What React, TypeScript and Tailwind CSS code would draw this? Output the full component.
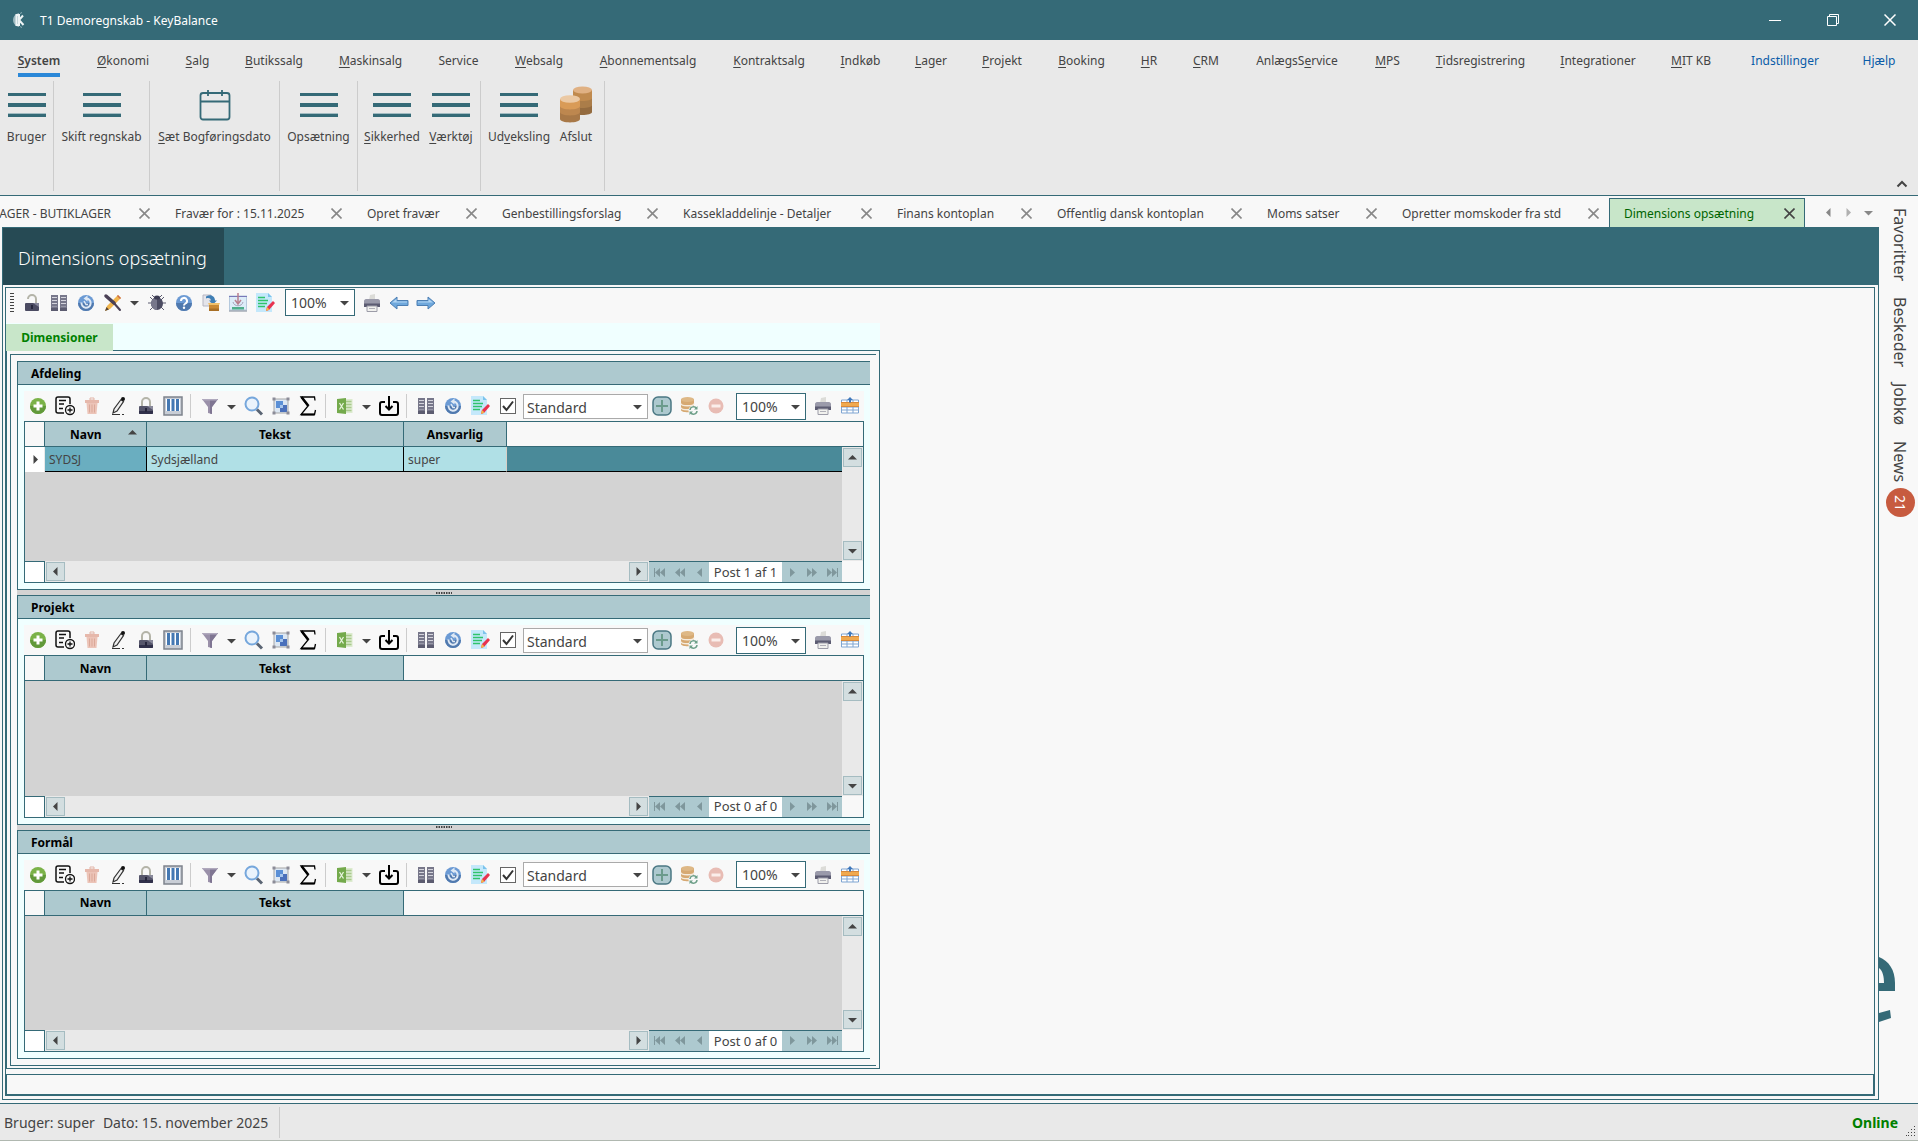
import type { ReactNode } from 'react'
import { Fragment } from 'react'
import clsx from 'clsx'

interface MenuEntry {
  label: string
  width: string
  active?: boolean
  link?: boolean
}

// '&' stands before the accelerator letter
const MENU: MenuEntry[] = [
  { label: '&System', width: 'w-[78px]', active: true },
  { label: '&Økonomi', width: 'w-[90px]' },
  { label: '&Salg', width: 'w-[59px]' },
  { label: '&Butikssalg', width: 'w-[94px]' },
  { label: '&Maskinsalg', width: 'w-[99px]' },
  { label: 'Service', width: 'w-[77px]' },
  { label: '&Websalg', width: 'w-[84px]' },
  { label: '&Abonnementsalg', width: 'w-[134px]' },
  { label: '&Kontraktsalg', width: 'w-[108px]' },
  { label: '&Indkøb', width: 'w-[75px]' },
  { label: '&Lager', width: 'w-[66px]' },
  { label: '&Projekt', width: 'w-[76px]' },
  { label: '&Booking', width: 'w-[83px]' },
  { label: '&HR', width: 'w-[52px]' },
  { label: '&CRM', width: 'w-[62px]' },
  { label: 'AnlægsS&ervice', width: 'w-[120px]' },
  { label: '&MPS', width: 'w-[61px]' },
  { label: '&Tidsregistrering', width: 'w-[125px]' },
  { label: '&Integrationer', width: 'w-[110px]' },
  { label: '&MIT KB', width: 'w-[76px]' },
  { label: 'Indstillinger', width: 'w-[112px]', link: true },
  { label: 'Hjælp', width: 'w-[76px]', link: true },
]

const TABS = [
  { label: 'LAGER - BUTIKLAGER', width: 'w-[182px]' },
  { label: 'Fravær for : 15.11.2025', width: 'w-[192px]' },
  { label: 'Opret fravær', width: 'w-[135px]' },
  { label: 'Genbestillingsforslag', width: 'w-[181px]' },
  { label: 'Kassekladdelinje - Detaljer', width: 'w-[214px]' },
  { label: 'Finans kontoplan', width: 'w-[160px]' },
  { label: 'Offentlig dansk kontoplan', width: 'w-[210px]' },
  { label: 'Moms satser', width: 'w-[135px]' },
  { label: 'Opretter momskoder fra std', width: 'w-[222px]' },
  { label: 'Dimensions opsætning', width: 'w-[196px]', active: true },
]

interface GroupData {
  title: string
  columns: string[]
  rows: string[][]
  status: string
}

const GROUPS: GroupData[] = [
  {
    title: 'Afdeling',
    columns: ['Navn', 'Tekst', 'Ansvarlig'],
    rows: [['SYDSJ', 'Sydsjælland', 'super']],
    status: 'Post 1 af 1',
  },
  { title: 'Projekt', columns: ['Navn', 'Tekst'], rows: [], status: 'Post 0 af 0' },
  { title: 'Formål', columns: ['Navn', 'Tekst'], rows: [], status: 'Post 0 af 0' },
]

const COLUMN_WIDTHS = ['w-[102px]', 'w-[257px]', 'w-[103px]']

function Hotkey({ label }: { label: string }) {
  const i = label.indexOf('&')
  if (i < 0) return <>{label}</>
  return (
    <>
      {label.slice(0, i)}
      <span className="underline underline-offset-2">{label[i + 1]}</span>
      {label.slice(i + 2)}
    </>
  )
}

function Svg({ children, size = 20 }: { children: ReactNode; size?: number }) {
  return (
    <svg width={size} height={size} viewBox={`0 0 ${size} ${size}`} fill="none" aria-hidden="true" className="shrink-0">
      {children}
    </svg>
  )
}

type Direction = 'up' | 'down' | 'left' | 'right'

const TRIANGLES: Record<Direction, string> = {
  up: 'M1 7.500L5.500 3L10 7.500Z',
  down: 'M1 4L5.500 8.500L10 4Z',
  left: 'M7.500 1L3 5.500L7.500 10Z',
  right: 'M3.500 1L8 5.500L3.500 10Z',
}

function Triangle({ dir, color = '#444444' }: { dir: Direction; color?: string }) {
  return (
    <Svg size={11}>
      <path d={TRIANGLES[dir]} fill={color} />
    </Svg>
  )
}

function LockIcon() {
  return (
    <Svg>
      <path d="M6 10V6a4 4 0 0 1 8 0v5" stroke="#b4b4a8" strokeWidth="2" />
      <rect x="3" y="10" width="14" height="8" rx="1" fill="#56566b" />
      <path d="M3 15h14v2a1 1 0 0 1-1 1H4a1 1 0 0 1-1-1z" fill="#30304a" />
      <path d="M11 10h5a1 1 0 0 1 1 1v3z" fill="#8a8a9b" />
      <path d="M9 12h2v4H9z" fill="#26263c" />
    </Svg>
  )
}

function UnlockIcon() {
  return (
    <Svg>
      <path d="M6 6a4 4 0 0 1 8 0v5" stroke="#b4b4a8" strokeWidth="2" />
      <rect x="3" y="10" width="14" height="8" rx="1" fill="#4b4b62" />
      <path d="M11 10h5a1 1 0 0 1 1 1v3z" fill="#85859a" />
      <path d="M9 12h2v4H9z" fill="#26263c" />
    </Svg>
  )
}

function BookIcon() {
  return (
    <Svg>
      <path d="M2 2h7v15H2zM11 2h7v15h-7z" fill="#77778a" />
      <path d="M2 15h7v3H2zM11 15h7v3h-7z" fill="#5c5c70" />
      <path d="M3 4.500h5M3 7.500h5M3 10.500h5M12 4.500h5M12 7.500h5M12 10.500h5" stroke="#d4d4dc" />
      <path d="M3 13.500h5M12 13.500h5" stroke="#9797a6" />
    </Svg>
  )
}

function ClockIcon() {
  return (
    <Svg>
      <circle cx="10" cy="10" r="8" fill="#6b9ad4" />
      <path d="M2 10a8 8 0 0 0 16 0z" fill="#5079ae" />
      <path d="M5.500 9.500a4.600 4.600 0 1 0 5-4" stroke="#dfe9f5" strokeWidth="2" />
      <path d="M11.500 2.500v6L7.500 5.500z" fill="#dfe9f5" />
      <path d="M8 8l2 3.500h2" stroke="#dfe9f5" strokeWidth="1.500" />
    </Svg>
  )
}

function ToolsIcon() {
  return (
    <Svg>
      <path d="M2 18l2-5L15 2l3 3L7 16z" fill="#f0b44c" />
      <path d="M2 18l1.500-4L6 16.500z" fill="#5b4634" />
      <path d="M14 3l1-1 3 3-1 1z" fill="#c96a4a" />
      <path d="M3 3l8 7" stroke="#4a4055" strokeWidth="3.500" strokeLinecap="round" />
      <path d="M10 9l7 8" stroke="#4a4055" strokeWidth="2" strokeLinecap="round" />
    </Svg>
  )
}

function BugIcon() {
  return (
    <Svg>
      <path d="M5 2l3 3M15 2l-3 3M1 10h18M3 4l3 3M17 4l-3 3M3 17l3-3M17 17l-3-3" stroke="#5c5c70" />
      <ellipse cx="10" cy="10.500" rx="6" ry="6.500" fill="#4d4d63" />
      <path d="M10 4a6 6.500 0 0 0-6 6.500A6 6.500 0 0 0 10 17z" fill="#77778b" />
      <ellipse cx="10" cy="4.500" rx="3" ry="2" fill="#3b3b52" />
    </Svg>
  )
}

function HelpIcon() {
  return (
    <Svg>
      <circle cx="10" cy="10" r="8" fill="#6b9ad4" />
      <path d="M2 10a8 8 0 0 0 16 0z" fill="#5079ae" />
      <path d="M7 8a3 3 0 1 1 4.500 2.500c-1 .6-1.500 1-1.500 2" stroke="#fff" strokeWidth="2" />
      <circle cx="10" cy="14.800" r="1.200" fill="#fff" />
    </Svg>
  )
}

function PackageIcon() {
  return (
    <Svg>
      <path d="M2 2h8v11H2z" fill="#e4e4ea" stroke="#b6b6c2" />
      <path d="M5 3.500c5-3 9 0 9 4h2l-4 4-4-4h2c0-2-2-3-5-2z" fill="#3f7fb5" />
      <path d="M8 12h10v6H8z" fill="#c98a35" />
      <path d="M8 12h10l1-2H7z" fill="#efc06b" />
      <path d="M8 15.500h10V18H8z" fill="#a86f26" />
    </Svg>
  )
}

function ImportIcon() {
  return (
    <Svg>
      <rect x="1.500" y="3" width="17" height="14" fill="#dcecf8" stroke="#b5c9dd" />
      <path d="M1 3.500h18" stroke="#7a78b8" />
      <path d="M10 0v10M7 7l3 4 3-4" stroke="#b97f8e" strokeWidth="1.500" />
      <path d="M5 9c1 5 9 5 10 0" stroke="#a5a0b8" />
      <path d="M4 14h12v2.500H4z" fill="#4fae8b" />
      <path d="M1 18h18" stroke="#7c8694" />
    </Svg>
  )
}

function EditIcon() {
  return (
    <Svg>
      <path d="M1 0h12l4 4v15H1z" fill="#c4e8fb" />
      <path d="M13 0l4 4h-4z" fill="#7cc3ec" />
      <path d="M3 4.500h7M3 7.500h10M3 10.500h9M3 13.500h7" stroke="#2fc46b" strokeWidth="1.600" />
      <path d="M11 18l1-4 6-6 2 2-6 7z" fill="#e8324f" />
      <path d="M11 18l1-4 2.500 2.500z" fill="#f5b945" />
    </Svg>
  )
}

function PrinterIcon() {
  return (
    <Svg>
      <path d="M7 7l1-5 5-1v6z" fill="#dcdcd8" />
      <path d="M2 8c0-1 1-2 2-2h12c1 0 2 1 2 2v6H2z" fill="#9a9aaa" />
      <path d="M2 10.500h16V14H2z" fill="#5c5c72" />
      <path d="M5 13h10v5.500H5z" fill="#f1f1ee" stroke="#9c9ca8" />
      <path d="M7 15.500h6" stroke="#b0b0b8" />
    </Svg>
  )
}

function ArrowIcon({ flip }: { flip?: boolean }) {
  return (
    <Svg>
      <g transform={flip ? 'translate(20 0) scale(-1 1)' : undefined}>
        <path d="M1 10L8 4V7.500h11v5H8V16z" fill="#6fa8dc" stroke="#4d7fb3" />
        <path d="M3 9.500L7.500 6V8.500H18v1z" fill="#b3d6f3" />
      </g>
    </Svg>
  )
}

function PlusIcon() {
  return (
    <Svg>
      <circle cx="10" cy="10" r="8" fill="#7bb248" />
      <path d="M2 10a8 8 0 0 0 16 0z" fill="#62993a" />
      <path d="M10 5.500v9M5.500 10h9" stroke="#fff" strokeWidth="3" />
    </Svg>
  )
}

function DocPlusIcon() {
  return (
    <Svg>
      <path d="M15 8V3a2 2 0 0 0-2-2H3a2 2 0 0 0-2 2v12a2 2 0 0 0 2 2h6" stroke="#111" strokeWidth="1.500" />
      <path d="M4 4.500h7M4 8h5M4 12.500h4" stroke="#111" strokeWidth="1.300" />
      <circle cx="15" cy="14" r="4.500" stroke="#111" strokeWidth="1.300" />
      <path d="M15 11.500v5M12.500 14h5" stroke="#111" strokeWidth="1.300" />
    </Svg>
  )
}

function TrashIcon() {
  return (
    <Svg>
      <path d="M8 2h4v2H8z" stroke="#e2b5a8" />
      <path d="M3 4h14v3H3z" fill="#e6b8ab" />
      <path d="M4.500 7h11l-1 11h-9z" fill="#ecc4b8" />
      <path d="M7.500 8.500v8M10 8.500v8M12.500 8.500v8" stroke="#dba898" />
    </Svg>
  )
}

function PencilIcon() {
  return (
    <Svg>
      <path d="M4 17l1-4L12 3.500l2.500 2L8 15z" stroke="#333" strokeWidth="1.200" fill="#f0f0f0" />
      <circle cx="14" cy="3" r="2" fill="#111" />
      <path d="M3 18.500h8M13 18.500h2" stroke="#333" strokeWidth="1.200" />
    </Svg>
  )
}

function ColumnsIcon() {
  return (
    <Svg>
      <rect x="1" y="1" width="18" height="18" fill="#c9ced6" stroke="#7d838c" strokeWidth="1.500" />
      <path d="M3 3h14v12H3z" fill="#fff" />
      <path d="M4 3h3v12H4zM8.500 3h3v12h-3zM13 3h3v12h-3z" fill="#4478b3" />
    </Svg>
  )
}

function FilterIcon() {
  return (
    <Svg>
      <path d="M2 3h16l-6 8v7l-4-1v-6z" fill="#9a90a9" />
      <path d="M10 3h8l-6 8v7l-2-.5z" fill="#7f7592" />
      <path d="M2 3h16l-1 1.500H3z" fill="#b0a9bd" />
    </Svg>
  )
}

function SearchIcon() {
  return (
    <Svg>
      <circle cx="8" cy="8" r="6.500" fill="#eaf3fc" stroke="#76a7dc" strokeWidth="2" />
      <path d="M13 13.500l5 5" stroke="#5a6473" strokeWidth="3" />
    </Svg>
  )
}

function GroupIcon() {
  return (
    <Svg>
      <rect x="3" y="3" width="14" height="14" fill="#dce7f3" stroke="#a5a5a5" />
      <path d="M5 5h7v7H5z" fill="#5a8fd6" />
      <path d="M9 9h7v7H9z" fill="#4a70bb" />
      <path d="M9 9h3v3H9z" fill="#a5c5ec" />
      <path d="M1.500 1.500h3v3h-3zM15.500 1.500h3v3h-3zM1.500 15.500h3v3h-3zM15.500 15.500h3v3h-3z" fill="#8c8c98" />
    </Svg>
  )
}

function SigmaIcon() {
  return (
    <Svg>
      <path d="M17 4.500L16.500 1H3l7 9-7 8.500h13.500L17.500 14" stroke="#000" strokeWidth="1.300" />
      <path d="M3.500 1l7 9" stroke="#000" strokeWidth="2.500" />
      <path d="M3 18.500h13.500" stroke="#000" strokeWidth="2" />
    </Svg>
  )
}

function ExcelIcon() {
  return (
    <Svg>
      <path d="M10 3h7.500v14H10z" fill="#dcebcf" />
      <path d="M11 5.500h5.500M11 8.500h5.500M11 11.500h5.500M11 14.500h5.500" stroke="#a9c98c" strokeWidth="1.500" />
      <path d="M2 3l9-1v16l-9-1z" fill="#74aa4c" />
      <path d="M4.500 7l4 6.500M8.500 7l-4 6.500" stroke="#e9f4df" strokeWidth="1.300" />
    </Svg>
  )
}

function DownloadIcon() {
  return (
    <Svg>
      <path d="M6 6H3a2 2 0 0 0-2 2v9a2 2 0 0 0 2 2h14a2 2 0 0 0 2-2V8a2 2 0 0 0-2-2h-3" stroke="#000" strokeWidth="2" />
      <path d="M10 0v13M6.500 10l3.500 3.500 3.500-3.500" stroke="#000" strokeWidth="2" />
    </Svg>
  )
}

function AddLayoutIcon() {
  return (
    <Svg>
      <rect x="1" y="1" width="18" height="18" rx="5" fill="#adc9cf" stroke="#4a7783" strokeWidth="1.500" />
      <path d="M10 4v12M4 10h12" stroke="#6b9b8c" strokeWidth="2" />
    </Svg>
  )
}

function DatabaseSyncIcon() {
  return (
    <Svg>
      <path d="M2 3v11c0 3 13 3 13 0V3z" fill="#d6a972" />
      <ellipse cx="8.500" cy="3.500" rx="6.500" ry="2.500" fill="#deb886" />
      <path d="M2 7.500c0 3 13 3 13 0M2 11.500c0 3 13 3 13 0" stroke="#f5ebdd" strokeWidth="1.300" />
      <circle cx="14.500" cy="14.500" r="5" fill="#f8f8f8" />
      <path d="M11 14a3.500 3.500 0 0 1 6.500-1.500M18 15a3.500 3.500 0 0 1-6.500 1.500" stroke="#6d9f88" strokeWidth="1.500" />
      <path d="M18.500 10v3.500H15zM10.500 19v-3.500H14z" fill="#6d9f88" />
    </Svg>
  )
}

function MinusIcon() {
  return (
    <Svg>
      <circle cx="10" cy="10" r="7.500" fill="#e8bcb4" />
      <path d="M5.500 10h9" stroke="#fbeeeb" strokeWidth="3" />
    </Svg>
  )
}

function TableIcon() {
  return (
    <Svg>
      <path d="M1.500 4h17v13h-17z" fill="#fff" stroke="#7fa5d2" />
      <path d="M1 14h18M1 11h18M7 4v13M13 4v13" stroke="#7fa5d2" />
      <path d="M1 6.500h18v4H1z" fill="#f0a94e" />
      <path d="M1 6.500h18M1 10.500h18" stroke="#d8893a" />
      <path d="M10 1l3 3h-2v2.500H9V4H7z" fill="#3f78bb" />
    </Svg>
  )
}

function MenuLinesIcon() {
  return (
    <svg width="38" height="34" viewBox="0 0 38 34" aria-hidden="true">
      <path d="M0 6h38v3H0zM0 16h38v4H0zM0 27h38v3H0z" fill="#356a77" />
      <path d="M0 26h38v1H0z" fill="#a3bcc2" />
    </svg>
  )
}

function CalendarIcon() {
  return (
    <svg width="32" height="34" viewBox="0 0 32 34" fill="none" stroke="#356a77" strokeWidth="1.800" aria-hidden="true">
      <rect x="1.500" y="6" width="29" height="26.500" rx="2.500" />
      <path d="M1.500 14.500h29M9 3v6M23 3v6" />
    </svg>
  )
}

function CoinsIcon() {
  return (
    <svg width="34" height="38" viewBox="0 0 34 38" aria-hidden="true">
      <path d="M14 5v22c0 4 19 4 19 0V5z" fill="#946b3f" />
      <path d="M14 5v15c0 4 19 4 19 0V5z" fill="#ab7d49" />
      <path d="M14 5v8c0 4 19 4 19 0V5z" fill="#c08a4e" />
      <ellipse cx="23.500" cy="5" rx="9.500" ry="3.500" fill="#e0b183" />
      <path d="M1 14v20c0 4.500 20 4.500 20 0V14z" fill="#a87847" />
      <path d="M1 14v13c0 4.500 20 4.500 20 0V14z" fill="#bd874f" />
      <path d="M1 14v7c0 4.500 20 4.500 20 0v-7z" fill="#d99b57" />
      <ellipse cx="11" cy="14" rx="10" ry="3.800" fill="#ebc9a4" />
    </svg>
  )
}

function Grip() {
  return (
    <svg width="4" height="20" viewBox="0 0 4 20" aria-hidden="true">
      <path d="M0 .5h4M0 3.500h4M0 6.500h4M0 9.500h4M0 12.500h4M0 15.500h4M0 18.500h4" stroke="#444444" />
    </svg>
  )
}

function ToolButton({ title, children }: { title: string; children: ReactNode }) {
  return (
    <button type="button" aria-label={title} className="flex w-[27px] shrink-0 justify-center">
      {children}
    </button>
  )
}

function DropArrow({ title }: { title: string }) {
  return (
    <button type="button" aria-label={title} className="flex w-[17px] shrink-0 justify-center">
      <Triangle dir="down" />
    </button>
  )
}

function Divider() {
  return <div className="mr-[5px] ml-1 h-6 w-px shrink-0 bg-[#cccccc]" />
}

function Combo({ label, value, className }: { label: string; value: string; className: string }) {
  return (
    <div className={clsx('relative shrink-0 border bg-white', className)}>
      <select
        aria-label={label}
        defaultValue={value}
        className="h-full w-full appearance-none bg-transparent pr-5 pb-0.5 text-sm leading-none text-[#444444] outline-none"
      >
        <option>{value}</option>
      </select>
      <span className="pointer-events-none absolute inset-y-0 right-1 flex items-center">
        <Triangle dir="down" />
      </span>
    </div>
  )
}

function ZoomCombo() {
  return <Combo label="Zoom" value="100%" className="h-[27px] w-[70px] border-[#356a77] pl-[5px]" />
}

function TitleBar() {
  return (
    <header className="flex h-10 shrink-0 items-center bg-[#356a77] text-white">
      <svg width="14" height="18" viewBox="0 0 14 18" fill="none" className="ml-3" aria-hidden="true">
        <path d="M7 2C3 3 1 6 1 9s2 6 6 7z" fill="#9db9c0" />
        <path d="M4.500 4h2.500v10H4.500zM7 9l4-4.500M7 9l4.500 5" stroke="#eef4f5" strokeWidth="2" />
        <path d="M8 2.500l2-1M8 15.500l2 1" stroke="#8fb0b8" />
      </svg>
      <h1 className="ml-[14px] flex-1 pt-0.5 text-xs">T1 Demoregnskab - KeyBalance</h1>
      <button type="button" aria-label="Minimer" className="flex w-[58px] justify-center">
        <Svg size={12}>
          <path d="M0 6.500h12" stroke="#fff" />
        </Svg>
      </button>
      <button type="button" aria-label="Gendan" className="flex w-[58px] justify-center">
        <Svg size={12}>
          <path d="M.5 2.500h9v9h-9zM2.500 2V.5h9v9H10" stroke="#fff" />
        </Svg>
      </button>
      <button type="button" aria-label="Luk" className="flex w-[56px] justify-center">
        <Svg size={12}>
          <path d="M.5.5l11 11M11.500.5l-11 11" stroke="#fff" strokeWidth="1.500" />
        </Svg>
      </button>
    </header>
  )
}

function MenuBar() {
  return (
    <nav className="flex h-[41px] shrink-0 bg-[#e9e9e9]">
      {MENU.map((item) => (
        <a key={item.label} href="#" className={clsx('flex shrink-0 flex-col items-center', item.width)}>
          <span
            className={clsx(
              'mt-3 flex h-[25px] items-start text-xs leading-[18px] whitespace-nowrap',
              item.active && 'border-b-4 border-[#2b88d8] font-semibold',
              item.link ? 'text-[#0a5ca8]' : 'text-[#444444]',
            )}
          >
            <span>
              <Hotkey label={item.label} />
            </span>
          </span>
        </a>
      ))}
    </nav>
  )
}

function RibbonButton({ label, width, children }: { label: string; width: string; children: ReactNode }) {
  return (
    <button type="button" className={clsx('flex shrink-0 flex-col items-center', width)}>
      <span className="mt-1 flex h-[38px] items-center">{children}</span>
      <span className="mt-[5px] text-xs leading-[18px] whitespace-nowrap">
        <Hotkey label={label} />
      </span>
    </button>
  )
}

function Ribbon() {
  const group = 'flex h-[110px] items-start border-r border-[#cccccc]'
  return (
    <section className="flex h-[115px] shrink-0 border-b border-[#356a77] bg-[#e9e9e9] text-[#444444]">
      <div className={group}>
        <RibbonButton label="Bruger" width="w-[53px]"><MenuLinesIcon /></RibbonButton>
      </div>
      <div className={group}>
        <RibbonButton label="Skift regnskab" width="w-[95px]"><MenuLinesIcon /></RibbonButton>
      </div>
      <div className={group}>
        <RibbonButton label="&Sæt Bogføringsdato" width="w-[129px]"><CalendarIcon /></RibbonButton>
      </div>
      <div className={group}>
        <RibbonButton label="Opsætning" width="w-[77px]"><MenuLinesIcon /></RibbonButton>
      </div>
      <div className={clsx(group, 'pr-1')}>
        <RibbonButton label="&Sikkerhed" width="w-[68px]"><MenuLinesIcon /></RibbonButton>
        <RibbonButton label="&Værktøj" width="w-[50px]"><MenuLinesIcon /></RibbonButton>
      </div>
      <div className={clsx(group, 'pr-[9px]')}>
        <RibbonButton label="Ud&veksling" width="w-[76px]"><MenuLinesIcon /></RibbonButton>
        <RibbonButton label="Afslut" width="w-[38px]"><CoinsIcon /></RibbonButton>
      </div>
      <button type="button" aria-label="Skjul bånd" className="mt-auto mr-[10px] mb-[5px] ml-auto">
        <Svg size={12}>
          <path d="M1.500 8.500L6 4l4.500 4.500" stroke="#444444" strokeWidth="2" />
        </Svg>
      </button>
    </section>
  )
}

function TabStrip() {
  return (
    <div className="flex h-[31px] shrink-0 items-end">
      <div className="flex min-w-0 flex-1 justify-end overflow-hidden">
        {TABS.map((tab) => (
          <div
            key={tab.label}
            className={clsx(
              'flex h-[29px] shrink-0 items-center border border-b-0 pr-[9px] pl-[14px] text-xs whitespace-nowrap',
              tab.width,
              tab.active
                ? 'border-[#356a77] bg-[#c8e6c9] text-[#006400]'
                : 'border-transparent text-[#444444]',
            )}
          >
            <button type="button" className="flex-1 pt-px text-left">{tab.label}</button>
            <button type="button" aria-label={`Luk ${tab.label}`}>
              <Svg size={11}>
                <path d="M.5.5l10 10M10.500.5l-10 10" stroke={tab.active ? '#444444' : '#888888'} strokeWidth="1.600" />
              </Svg>
            </button>
          </div>
        ))}
      </div>
      <div className="flex h-[29px] w-[74px] shrink-0 items-center gap-[9px] pl-[18px]">
        <button type="button" aria-label="Forrige fane"><Triangle dir="left" color="#888888" /></button>
        <button type="button" aria-label="Næste fane"><Triangle dir="right" color="#b0b0b0" /></button>
        <button type="button" aria-label="Alle faner"><Triangle dir="down" color="#888888" /></button>
      </div>
    </div>
  )
}

function PageToolbar() {
  return (
    <div className="flex h-[35px] shrink-0 items-center pb-1.5 pl-1">
      <Grip />
      <div className="ml-1 flex items-center">
        <ToolButton title="Lås op"><UnlockIcon /></ToolButton>
        <ToolButton title="Kartotek"><BookIcon /></ToolButton>
        <ToolButton title="Genopfrisk"><ClockIcon /></ToolButton>
        <ToolButton title="Værktøjer"><ToolsIcon /></ToolButton>
        <DropArrow title="Flere værktøjer" />
        <ToolButton title="Fejlsøg"><BugIcon /></ToolButton>
        <ToolButton title="Hjælp"><HelpIcon /></ToolButton>
        <ToolButton title="Pakke"><PackageIcon /></ToolButton>
        <ToolButton title="Importer"><ImportIcon /></ToolButton>
        <ToolButton title="Rediger"><EditIcon /></ToolButton>
      </div>
      <div className="mr-[3px] ml-[7px]">
        <ZoomCombo />
      </div>
      <ToolButton title="Udskriv"><PrinterIcon /></ToolButton>
      <ToolButton title="Tilbage"><ArrowIcon /></ToolButton>
      <ToolButton title="Frem"><ArrowIcon flip /></ToolButton>
    </div>
  )
}

function GridToolbar() {
  return (
    <div className="flex h-[30px] shrink-0 items-center bg-[#f8f8f8]">
      <ToolButton title="Ny"><PlusIcon /></ToolButton>
      <ToolButton title="Ny kopi"><DocPlusIcon /></ToolButton>
      <ToolButton title="Slet"><TrashIcon /></ToolButton>
      <ToolButton title="Rediger"><PencilIcon /></ToolButton>
      <ToolButton title="Lås"><LockIcon /></ToolButton>
      <ToolButton title="Kolonner"><ColumnsIcon /></ToolButton>
      <Divider />
      <ToolButton title="Filter"><FilterIcon /></ToolButton>
      <DropArrow title="Flere filtre" />
      <ToolButton title="Søg"><SearchIcon /></ToolButton>
      <ToolButton title="Gruppér"><GroupIcon /></ToolButton>
      <ToolButton title="Sum"><SigmaIcon /></ToolButton>
      <Divider />
      <ToolButton title="Excel"><ExcelIcon /></ToolButton>
      <DropArrow title="Flere eksporter" />
      <ToolButton title="Hent"><DownloadIcon /></ToolButton>
      <Divider />
      <ToolButton title="Kartotek"><BookIcon /></ToolButton>
      <ToolButton title="Genopfrisk"><ClockIcon /></ToolButton>
      <ToolButton title="Layout"><EditIcon /></ToolButton>
      <label className="relative mx-[7px] size-4 shrink-0">
        <input
          type="checkbox"
          defaultChecked
          aria-label="Brug layout"
          className="block size-4 appearance-none border border-[#666666] bg-white"
        />
        <svg width="16" height="16" viewBox="0 0 16 16" fill="none" className="pointer-events-none absolute inset-0" aria-hidden="true">
          <path d="M3 8l3.500 4L13 3.500" stroke="#333333" strokeWidth="2" />
        </svg>
      </label>
      <Combo label="Layout" value="Standard" className="h-[25px] w-[125px] border-[#aaaaaa] pl-[3px]" />
      <ToolButton title="Tilføj layout"><AddLayoutIcon /></ToolButton>
      <ToolButton title="Opdater layout"><DatabaseSyncIcon /></ToolButton>
      <ToolButton title="Fjern layout"><MinusIcon /></ToolButton>
      <div className="mr-[3px] ml-auto">
        <ZoomCombo />
      </div>
      <div className="mr-px flex">
        <ToolButton title="Udskriv"><PrinterIcon /></ToolButton>
        <ToolButton title="Tabel"><TableIcon /></ToolButton>
      </div>
    </div>
  )
}

function ScrollButton({ dir, title }: { dir: Direction; title: string }) {
  return (
    <button
      type="button"
      aria-label={title}
      className="flex size-[19px] shrink-0 items-center justify-center border border-[#a5bcc1] bg-[#d3dee0]"
    >
      <Triangle dir={dir} />
    </button>
  )
}

interface NavButtonProps {
  title: string
  back?: boolean
  double?: boolean
  bar?: boolean
}

function NavButton({ title, back, double, bar }: NavButtonProps) {
  return (
    <button type="button" aria-label={title} className="flex w-5 justify-center">
      <Svg size={13}>
        <g fill="#7f979c" transform={back ? 'translate(13 0) scale(-1 1)' : undefined}>
          {double ? <path d="M1 2l5 4.500L1 11zM6 2l5 4.500L6 11z" /> : <path d="M4 2l5 4.500L4 11z" />}
          {bar && <path d="M11 2h1v9h-1z" />}
        </g>
      </Svg>
    </button>
  )
}

function GridTable({ data }: { data: GroupData }) {
  return (
    <table className="w-full table-fixed border-separate border-spacing-0 text-xs text-[#444444]">
      <thead>
        <tr className="h-[25px]">
          <th aria-label="Markør" className="w-5 border-r border-b border-[#356a77] p-0" />
          {data.columns.map((column, i) => (
            <th
              key={column}
              scope="col"
              className={clsx(
                'border-r border-b border-[#356a77] bg-[#adc9cf] p-0 pt-px font-bold text-black',
                COLUMN_WIDTHS[i],
              )}
            >
              {i === 0 && data.rows.length > 0 ? (
                <span className="flex items-center pr-2 pl-[25px]">
                  {column}
                  <span className="ml-auto pb-1"><Triangle dir="up" /></span>
                </span>
              ) : (
                column
              )}
            </th>
          ))}
          <th aria-label="Resten" className="border-b border-[#356a77] p-0" />
        </tr>
      </thead>
      <tbody>
        {data.rows.map((row) => (
          <tr key={row[0]} className="h-[25px]">
            <td className="border-r border-[#e9e9e9] bg-white p-0">
              <span className="flex justify-center pl-px"><Triangle dir="right" /></span>
            </td>
            {row.map((cell, i) => (
              <td
                key={cell}
                className={clsx(
                  'border-r border-b border-b-black p-0 pt-0.5 pl-1',
                  i === 0 ? 'bg-[#6aaec0]' : 'bg-[#b0e0e6]',
                  i < row.length - 1 ? 'border-r-black' : 'border-r-[#d8cfc6]',
                )}
              >
                {cell}
              </td>
            ))}
            <td className="border-b border-black bg-[#4a8a99] p-0" />
          </tr>
        ))}
      </tbody>
    </table>
  )
}

function GridGroup({ data }: { data: GroupData }) {
  return (
    <section className="flex min-h-0 flex-1 flex-col border-y border-l border-[#356a77] bg-[#f0ffff]">
      <h2 className="h-[23px] shrink-0 border-b border-[#356a77] bg-[#adc9cf] pt-px pl-[13px] text-xs leading-[22px] font-bold text-black">
        {data.title}
      </h2>
      <div className="flex min-h-0 flex-1 flex-col p-1.5">
        <GridToolbar />
        <div className="flex min-h-0 flex-1 border border-[#356a77] bg-[#f8f8f8]">
          <div className="flex min-w-0 flex-1 flex-col">
            <div className="min-h-0 flex-1 bg-[#d3d3d3]">
              <div className="bg-[#f8f8f8]">
                <GridTable data={data} />
              </div>
            </div>
            <div className="flex h-[21px] shrink-0 bg-[#e9e9e9]">
              <div className="w-5 border-t border-r border-[#356a77] bg-white" />
              <div className="flex flex-1 items-center justify-between px-px">
                <ScrollButton dir="left" title="Rul til venstre" />
                <ScrollButton dir="right" title="Rul til højre" />
              </div>
              <div className="flex items-center border-t border-[#356a77] bg-[#adc9cf]">
                <NavButton title="Første post" back double bar />
                <NavButton title="Forrige side" back double />
                <NavButton title="Forrige post" back />
                <span className="flex h-full w-[73px] items-center justify-center bg-white pt-px text-[13px] whitespace-nowrap text-[#444444]">
                  {data.status}
                </span>
                <NavButton title="Næste post" />
                <NavButton title="Næste side" double />
                <NavButton title="Sidste post" double bar />
              </div>
            </div>
          </div>
          <div className="flex w-[21px] shrink-0 flex-col">
            <div className="h-[25px] border-b border-[#356a77]" />
            <div className="flex flex-1 flex-col items-center justify-between bg-[#e9e9e9] py-px">
              <ScrollButton dir="up" title="Rul op" />
              <ScrollButton dir="down" title="Rul ned" />
            </div>
            <div className="h-[21px]" />
          </div>
        </div>
      </div>
    </section>
  )
}

function Splitter() {
  return (
    <div className="flex h-[5px] shrink-0 items-center justify-center bg-[#d3d3d3]">
      <svg width="16" height="2" viewBox="0 0 16 2" aria-hidden="true">
        <path d="M0 1h16" stroke="#444444" strokeWidth="2" strokeDasharray="1.500 1" />
      </svg>
    </div>
  )
}

function DimensionPanel() {
  return (
    <div className="flex min-h-0 w-[874px] max-w-full flex-1 flex-col">
      <div className="flex h-7 shrink-0 bg-[#f0ffff]">
        <button type="button" className="mt-px w-[107px] bg-[#c8e6c9] pt-px text-xs font-bold text-[#008000]">
          Dimensioner
        </button>
        <div className="flex-1 border-b border-[#356a77]" />
      </div>
      <div className="flex min-h-0 flex-1 flex-col border-x border-b border-[#356a77] p-[3px] pb-0.5">
        <div className="flex min-h-0 flex-1 flex-col border-y border-l border-[#356a77] p-1.5">
          {GROUPS.map((data, i) => (
            <Fragment key={data.title}>
              {i > 0 && <Splitter />}
              <GridGroup data={data} />
            </Fragment>
          ))}
        </div>
      </div>
    </div>
  )
}

function DocumentPage() {
  return (
    <main className="ml-0.5 flex min-h-0 flex-1 flex-col border border-[#356a77]">
      <div className="flex h-[57px] shrink-0 bg-[#356a77]">
        <h2 className="flex items-center bg-[#264a54] pt-0.5 pr-[17px] pl-[15px] text-lg font-light text-white">
          Dimensions opsætning
        </h2>
      </div>
      <div className="mt-0.5 mr-[3px] mb-[3px] ml-0.5 flex min-h-0 flex-1 flex-col border border-[#356a77]">
        <PageToolbar />
        <DimensionPanel />
        <div className="mt-[5px] h-[21px] shrink-0 border border-[#356a77]" />
      </div>
    </main>
  )
}

function SidePanel() {
  return (
    <aside className="flex w-[39px] shrink-0 flex-col text-base text-[#444444]">
      <div className="flex flex-col items-center gap-4 pt-3 pl-[3px] leading-6">
        {['Favoritter', 'Beskeder', 'Jobkø'].map((name) => (
          <button key={name} type="button" className="[writing-mode:vertical-rl]">{name}</button>
        ))}
        <button type="button" className="flex flex-col items-center gap-1.5">
          <span className="[writing-mode:vertical-rl]">News</span>
          <span className="flex size-[29px] items-center justify-center rounded-full bg-[#c75b3f] text-sm text-white [writing-mode:vertical-rl]">
            21
          </span>
        </button>
      </div>
      {/* the tail of the logo behind the document window */}
      <svg width="20" height="68" viewBox="0 0 20 68" className="mt-auto mb-[80px]" aria-hidden="true">
        <path d="M0 2C10 6 16 15 16 28V36H0V28H5C5 22 4 16 0 13Z" fill="#356a77" />
        <path d="M0 58L11 55L12 63L0 67Z" fill="#356a77" />
      </svg>
    </aside>
  )
}

function StatusBar() {
  return (
    <footer className="flex h-[38px] shrink-0 items-center border-t border-b border-t-[#356a77] border-b-[#b0b8b0] bg-[#e9e9e9] text-sm text-[#444444]">
      <div className="flex h-[31px] w-[280px] items-center gap-2 border-r border-[#cccccc] pt-px pl-1 whitespace-nowrap">
        <span>Bruger: super</span>
        <span>Dato: 15. november 2025</span>
      </div>
      <span className="mr-2 ml-auto pt-px font-bold text-[#008000]">Online</span>
      <svg width="10" height="10" viewBox="0 0 10 10" className="mr-0.5 mb-1 self-end" aria-hidden="true">
        <path d="M8 0h1v1H8zM5 3h1v1H5zM8 3h1v1H8zM2 6h1v1H2zM5 6h1v1H5zM8 6h1v1H8zM0 9h1v1H0zM2 9h1v1H2zM5 9h1v1H5zM8 9h1v1H8z" fill="#444444" />
      </svg>
    </footer>
  )
}

export default function App() {
  return (
    <div className="flex h-screen min-h-[900px] flex-col overflow-hidden bg-[#f8f8f8] font-['Noto_Sans','Open_Sans',sans-serif]">
      <TitleBar />
      <MenuBar />
      <Ribbon />
      <div className="flex min-h-0 flex-1">
        <div className="flex min-w-0 flex-1 flex-col pb-[3px]">
          <TabStrip />
          <DocumentPage />
        </div>
        <SidePanel />
      </div>
      <StatusBar />
    </div>
  )
}
